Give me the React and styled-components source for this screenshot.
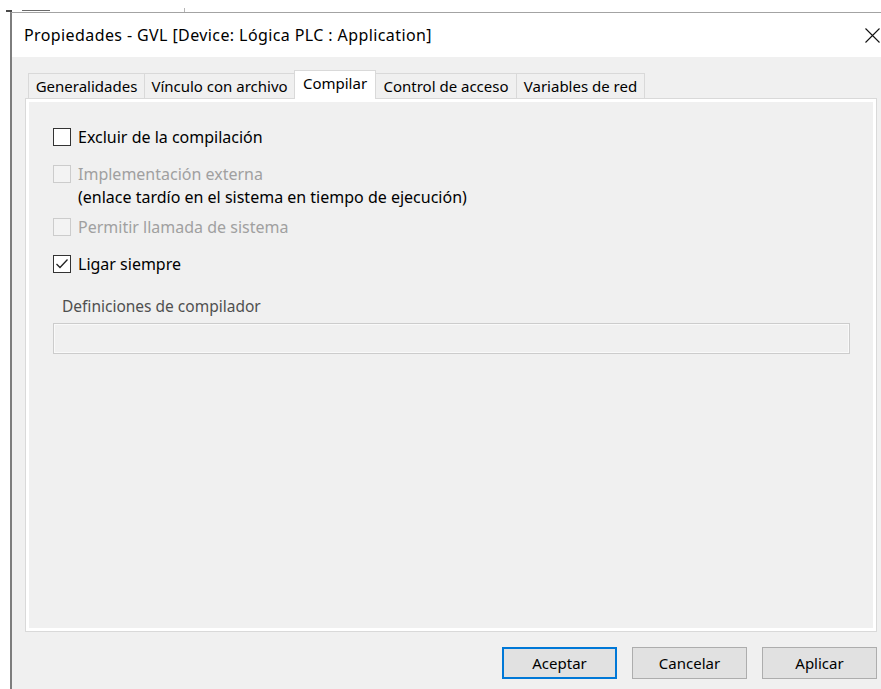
import styled, { createGlobalStyle, css } from 'styled-components';

const GlobalStyle = createGlobalStyle`
  html, body {
    margin: 0;
    background: #ffffff;
  }
  body {
    font-family: "Noto Sans", "Open Sans", sans-serif;
    color: #000;
  }
`;

const Page = styled.div`
  width: 881px;
  height: 689px;
  overflow: hidden;
  display: flex;
  flex-direction: column;
`;

// the window behind the dialog, only a sliver of it shows
const Backdrop = styled.div`
  height: 12px;
  display: flex;
  align-items: flex-end;
  gap: 10px;
  padding-left: 6px;
`;

const Scrap = styled.span`
  display: block;
  width: ${({ $w }) => $w}px;
  height: ${({ $h }) => $h}px;
  margin-left: ${({ $ml }) => $ml || 0}px;
  margin-bottom: ${({ $mb }) => $mb || 0}px;
  background: ${({ $c }) => $c};
`;

const Frame = styled.div`
  flex: 1;
  margin-left: 10px;
  border-left: 2px solid #7d7d7d;
  border-top: 1px solid #a3a3a3;
  display: flex;
  flex-direction: column;
  min-height: 0;
`;

const TitleBar = styled.div`
  height: 44px;
  background: #ffffff;
  display: flex;
  align-items: center;
  justify-content: space-between;
  padding: 0 1px 0 12px;
`;

const Title = styled.div`
  font-size: 16px;
  letter-spacing: 0.4px;
  color: #000;
  white-space: nowrap;
`;

const CloseButton = styled.div`
  width: 16px;
  height: 16px;
  display: flex;
  align-items: center;
  justify-content: center;
`;

const Body = styled.div`
  flex: 1;
  background: #f0f0f0;
  display: flex;
  flex-direction: column;
  padding: 13px 4px 10px 13px;
`;

const TabRow = styled.div`
  height: 28px;
  display: flex;
  align-items: flex-end;
  padding-left: 3px;
  position: relative;
  z-index: 1;
`;

const Tab = styled.div`
  width: ${({ $w }) => $w}px;
  height: 25px;
  box-sizing: border-box;
  border: 1px solid #d9d9d9;
  border-bottom: none;
  margin-right: -1px;
  background: #f0f0f0;
  display: flex;
  align-items: center;
  justify-content: center;
  font-size: 15px;
  white-space: nowrap;
  color: #000;

  ${({ $active }) =>
    $active &&
    css`
      height: 29px;
      margin-bottom: -1px;
      background: #ffffff;
      padding-bottom: 4px;
      position: relative;
      z-index: 2;
    `}
`;

const Panel = styled.div`
  height: 534px;
  box-sizing: border-box;
  border: 1px solid #d9d9d9;
  background: #ffffff;
  padding: 3px;
  display: flex;
`;

const Content = styled.div`
  flex: 1;
  background: #f0f0f0;
  display: flex;
  flex-direction: column;
  padding: 25px 23px 0 24px;
`;

const CheckRow = styled.div`
  display: flex;
  align-items: flex-start;
  gap: 7px;
  margin-top: ${({ $mt }) => $mt}px;
`;

const Box = styled.div`
  width: 18px;
  height: 18px;
  margin-top: 1px;
  box-sizing: border-box;
  border: 1px solid ${({ $disabled }) => ($disabled ? '#cccccc' : '#333333')};
  background: ${({ $disabled }) => ($disabled ? '#f3f3f3' : '#ffffff')};
  display: flex;
  align-items: center;
  justify-content: center;
  flex-shrink: 0;
`;

const LabelLines = styled.div`
  display: flex;
  flex-direction: column;
  gap: 3px;
`;

const LabelText = styled.span`
  font-size: 16px;
  line-height: 20px;
  color: ${({ $disabled }) => ($disabled ? '#a0a0a0' : '#000000')};
  white-space: nowrap;
`;

const FieldLabel = styled.div`
  margin-top: 22px;
  padding-left: 9px;
  font-size: 15.5px;
  line-height: 20px;
  color: #4f4f4f;
`;

const DefinesInput = styled.div`
  margin-top: 7px;
  height: 31px;
  box-sizing: border-box;
  border: 1px solid #cccccc;
  box-shadow: inset 0 0 0 1px #f9f9f9;
  background: #f0f0f0;
`;

const ButtonRow = styled.div`
  margin-top: 15px;
  display: flex;
  justify-content: flex-end;
  gap: 15px;
`;

const Button = styled.div`
  width: 115px;
  height: 32px;
  box-sizing: border-box;
  border: 1px solid #adadad;
  background: #e1e1e1;
  display: flex;
  align-items: center;
  justify-content: center;
  font-size: 15px;
  color: #000;

  ${({ $default }) =>
    $default &&
    css`
      border: 2px solid #0078d7;
    `}
`;

const tabs = [
  { label: 'Generalidades', w: 117 },
  { label: 'Vínculo con archivo', w: 151 },
  { label: 'Compilar', w: 82, active: true },
  { label: 'Control de acceso', w: 142 },
  { label: 'Variables de red', w: 129 },
];

function CheckMark() {
  return (
    <svg width="14" height="14" viewBox="0 0 14 14">
      <polyline points="1.5,7 5,10.5 12.5,2.5" fill="none" stroke="#222" strokeWidth="1.3" />
    </svg>
  );
}

function Check({ checked, disabled, lines, mt }) {
  return (
    <CheckRow $mt={mt}>
      <Box $disabled={disabled}>{checked && <CheckMark />}</Box>
      <LabelLines>
        {lines.map((line, i) => (
          <LabelText key={i} $disabled={disabled && i === 0}>
            {line}
          </LabelText>
        ))}
      </LabelLines>
    </CheckRow>
  );
}

export default function App() {
  return (
    <>
      <GlobalStyle />
      <Page>
        <Backdrop>
          <Scrap $w={6} $h={2} $c="#4a4a4a" $mb={0} />
          <Scrap $w={28} $h={1} $c="#6a6a6a" $ml={0} $mb={1} />
          <Scrap $w={1} $h={4} $c="#b5b5b5" $ml={124} />
        </Backdrop>
        <Frame>
          <TitleBar>
            <Title>Propiedades - GVL [Device: Lógica PLC : Application]</Title>
            <CloseButton>
              <svg width="15" height="15" viewBox="0 0 15 15">
                <path d="M0.5 0.5 L14.5 14.5 M14.5 0.5 L0.5 14.5" stroke="#111" strokeWidth="1.1" />
              </svg>
            </CloseButton>
          </TitleBar>
          <Body>
            <TabRow>
              {tabs.map((t) => (
                <Tab key={t.label} $w={t.w} $active={t.active}>
                  {t.label}
                </Tab>
              ))}
            </TabRow>
            <Panel>
              <Content>
                <Check lines={['Excluir de la compilación']} mt={0} />
                <Check
                  disabled
                  lines={[
                    'Implementación externa',
                    '(enlace tardío en el sistema en tiempo de ejecución)',
                  ]}
                  mt={17}
                />
                <Check disabled lines={['Permitir llamada de sistema']} mt={10} />
                <Check checked lines={['Ligar siempre']} mt={17} />
                <FieldLabel>Definiciones de compilador</FieldLabel>
                <DefinesInput />
              </Content>
            </Panel>
            <ButtonRow>
              <Button $default>Aceptar</Button>
              <Button>Cancelar</Button>
              <Button>Aplicar</Button>
            </ButtonRow>
          </Body>
        </Frame>
      </Page>
    </>
  );
}
